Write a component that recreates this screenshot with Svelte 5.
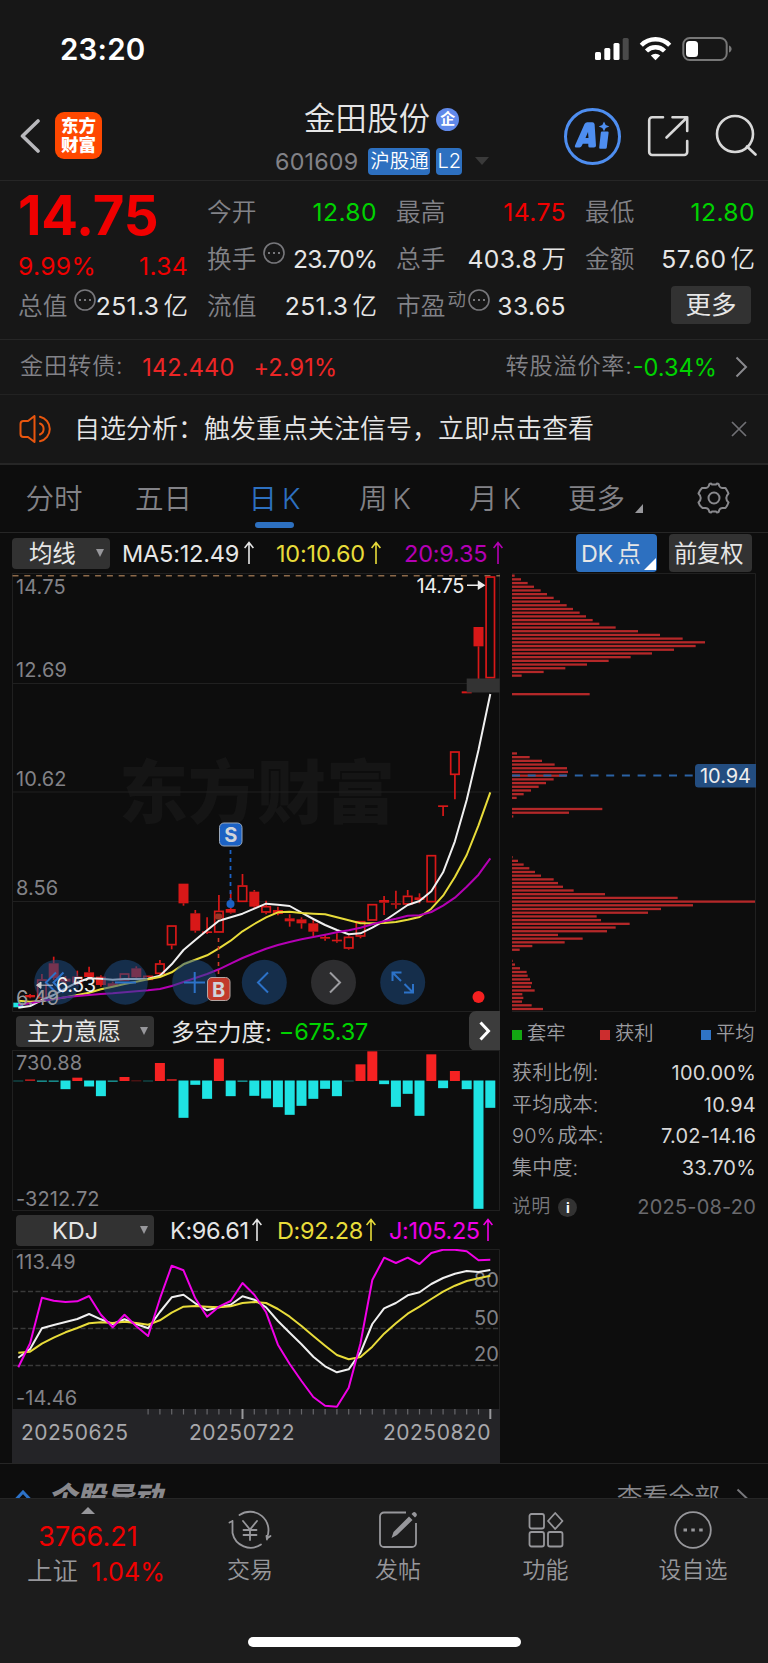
<script lang="ts">
    type Candle = [kind: 'f' | 'h', high: number, top: number, bottom: number, low: number];

    const STEP = 11.8;
    const x = (i: number) => 18.3 + i * STEP;
    const line = (ys: number[], base: number) =>
        ys.map((y, i) => `${x(i).toFixed(1)},${(base + y / 3).toFixed(1)}`).join(' ');

    // Candles: f = filled, h = hollow, values measured from the 740 gridline in thirds of a pixel
    const candles: Candle[] = [
        ['f', 788, 788, 802, 802], ['f', 762, 765, 772, 775], ['h', 702, 718, 775, 780],
        ['f', 650, 670, 714, 720], ['f', 708, 716, 725, 730], ['h', 692, 710, 728, 736],
        ['f', 680, 697, 711, 715], ['f', 706, 710, 735, 740], ['f', 725, 730, 740, 742],
        ['h', 700, 700, 722, 722], ['f', 679, 685, 712, 715], ['h', 707, 707, 720, 720],
        ['h', 660, 670, 702, 706], ['h', 556, 556, 616, 628], ['f', 431, 431, 490, 497],
        ['f', 510, 520, 572, 578], ['f', 532, 574, 579, 582], ['h', 465, 512, 578, 578],
        ['f', 455, 507, 518, 521], ['h', 402, 436, 486, 486], ['f', 450, 455, 500, 505],
        ['h', 482, 498, 518, 523], ['f', 500, 510, 522, 526], ['f', 523, 535, 544, 560],
        ['f', 532, 538, 550, 566], ['f', 540, 550, 575, 588], ['f', 583, 591, 596, 602],
        ['f', 580, 599, 604, 608], ['h', 586, 590, 626, 629], ['h', 543, 543, 590, 595],
        ['h', 492, 492, 542, 542], ['f', 468, 480, 488, 525], ['f', 452, 490, 494, 506],
        ['h', 450, 467, 494, 494], ['f', 460, 472, 480, 490], ['h', 345, 345, 487, 487],
        ['f', 196, 196, 201, 228], ['h', 34, 34, 105, 178], ['f', -146, -146, -140, -140],
        ['f', -339, -339, -281, -183], ['h', -491, -491, -185, -185]
    ];

    const ma5 = [803, 798, 780, 765, 745, 727, 715, 716, 719, 717, 717, 716, 707, 673, 630, 600, 571, 542, 532, 521, 506, 491, 494, 498, 518, 537, 555, 570, 583, 580, 563, 543, 519, 495, 483, 454, 397, 304, 180, 30, -138];
    const ma10 = [782, 785, 783, 778, 772, 765, 758, 748, 740, 732, 725, 718, 711, 697, 673, 659, 646, 625, 602, 574, 552, 532, 517, 515, 519, 521, 523, 532, 541, 550, 550, 549, 546, 539, 531, 506, 467, 411, 345, 256, 157];
    const ma20 = [795, 790, 783, 777, 772, 768, 765, 762, 760, 757, 754, 751, 747, 738, 726, 714, 702, 688, 671, 654, 640, 626, 615, 606, 598, 591, 584, 577, 571, 563, 553, 544, 536, 527, 526, 516, 497, 473, 440, 404, 355];

    // Long/short strength, positive values are buyers
    const force = [-1, 5, -4, -4, -26, 10, -18, -47, -4, 12, 2, -1, 54, 6, -112, -13, -55, 67, -47, -4, -46, -54, -80, -103, -76, -55, -25, -47, -1, 50, 89, -11, -79, -40, -106, 80, -23, 30, -26, -385, -82];

    const kdjJ = [412, 340, 203, 212, 216, 214, 198, 254, 292, 254, 289, 318, 206, 107, 121, 205, 260, 230, 213, 159, 194, 247, 344, 402, 453, 501, 527, 530, 473, 340, 150, 83, 99, 83, 102, 69, 59, 59, 64, 91, 89];
    const kdjK = [383, 357, 295, 285, 276, 267, 252, 268, 282, 268, 282, 295, 246, 202, 194, 220, 241, 232, 224, 199, 209, 232, 273, 308, 343, 380, 409, 427, 418, 368, 282, 235, 219, 196, 187, 162, 144, 131, 123, 126, 120];
    const kdjD = [368, 365, 341, 323, 307, 294, 280, 277, 279, 275, 279, 284, 271, 248, 230, 228, 230, 232, 229, 219, 216, 219, 237, 260, 288, 318, 347, 375, 388, 381, 350, 311, 280, 251, 230, 207, 185, 167, 153, 145, 137];

    // Chip distribution, each group starts at a price row
    const chipGroups: [number, number[]][] = [
        [0, [8, 27, 47, 66, 86, 105, 125, 144, 164, 183, 203, 222, 242, 262, 311, 378, 444, 512, 579, 551, 486, 420, 356, 290, 225, 160, 95, 29]],
        [32, [233]],
        [48, [15, 53, 90, 128, 165, 168, 164, 125, 102, 80, 57, 35, 14]],
        [63, [271, 171, 4]],
        [76, [2, 18, 35, 52, 69, 87, 125, 138, 153, 185, 279, 497, 729, 543, 447, 408, 254, 267, 353, 311, 285, 138, 212, 158, 61, 23]],
        [104, [2, 9, 24, 44, 47, 54, 60, 57, 68, 31, 34, 30, 59, 93]]
    ];
    const chips = chipGroups.flatMap(([start, ws]) => ws.map((w, i) => ({ y: 575.7 + (start + i) * 3.704, w: w / 3 })));

    const tabs = ['分时', '五日', '日 K', '周 K', '月 K', '更多'];
    const stats = [
        ['获利比例:', '100.00%'],
        ['平均成本:', '10.94'],
        ['90% 成本:', '7.02-14.16'],
        ['集中度:', '33.70%']
    ];
    const ticks = Array.from({ length: 30 }, (_, i) => i + 11);

    let activeTab = $state(2);
</script>

{#snippet dots()}
    <svg class="dots" width="22" height="22" viewBox="0 0 22 22" fill="none" stroke="#77777b" stroke-width="1.6">
        <circle cx="11" cy="11" r="10" />
        <path d="M5 11h2M10 11h2M15 11h2" stroke-width="2" />
    </svg>
{/snippet}

{#snippet up()}
    <svg class="up" width="10" height="24" viewBox="0 0 10 24" fill="none" stroke="currentColor" stroke-width="1.6">
        <path d="M5 23V2M.6 7 5 1.6 9.4 7" />
    </svg>
{/snippet}

<div class="screen">
    <div class="status">
        <span class="time">23:20</span>
        <svg width="140" height="26" viewBox="594 35 140 26">
            <rect x="595" y="52" width="6" height="8" rx="1.5" fill="#fff" />
            <rect x="604.3" y="48" width="6" height="12" rx="1.5" fill="#fff" />
            <rect x="613.5" y="43" width="6" height="17" rx="1.5" fill="#fff" />
            <rect x="622.7" y="38" width="6" height="22" rx="1.5" fill="#4a4a4a" />
            <g fill="none" stroke="#fff" stroke-width="4.4">
                <path d="M641.3 45.2a20 20 0 0 1 28.4 0" />
                <path d="M646.5 51a12.8 12.8 0 0 1 18 0" />
            </g>
            <path d="M650.8 55.6a7 7 0 0 1 9.4 0l-4.7 4.6z" fill="#fff" />
            <rect x="683.3" y="38" width="43.4" height="22" rx="6.5" fill="none" stroke="#777" stroke-width="2" />
            <rect x="686" y="41" width="12" height="16" rx="3.5" fill="#fff" />
            <path d="M729 45.5c3.5 1.2 3.5 5.8 0 7z" fill="#777" />
        </svg>
    </div>

    <header>
        <svg class="back" width="20" height="34" viewBox="0 0 20 34" fill="none" stroke="#b8b8bc" stroke-width="3.6" stroke-linecap="round" stroke-linejoin="round">
            <path d="M18 2 2.5 17 18 32" />
        </svg>
        <div class="logo">东方<br />财富</div>
        <div class="title">
            <div class="name">金田股份<span class="badge">企</span></div>
            <div class="code">
                601609<span class="tag">沪股通</span><span class="tag l2">L2</span>
                <svg width="14" height="8" viewBox="0 0 14 8"><path d="M0 0h14L7 8z" fill="#3a3a3a" /></svg>
            </div>
        </div>
        <svg class="ai" width="57" height="57" viewBox="0 0 57 57">
            <circle cx="28.5" cy="28.5" r="27" fill="none" stroke="#4e8ef0" stroke-width="3" />
            <g fill="#4e8ef0">
                <path fill-rule="evenodd" d="M11 37.5 20.5 16q1-1.7 2.8-1.7h5q2 0 2.3 2L32 37.5q0 2-2 2h-4q-1.7 0-1.7-1.6v-2.2h-5.5l-1.1 2.4q-.7 1.4-2.2 1.4h-3q-2.2 0-1.5-2zM21.5 30h3l-.5-6z" />
                <path d="M37 23.5h6.6q1.2 0 1 1.2l-1.8 14.8q-.2 1.3-1.4 1.3h-5q-1.4 0-1.2-1.3l1.6-14.8q.1-1.2 1.2-1.2zM40 13.5l1.7 3.4 3.6 1.5-3.6 1.6-1.7 3.3-1.7-3.3-3.6-1.6 3.6-1.5z" />
            </g>
        </svg>
        <svg class="share" width="42" height="42" viewBox="0 0 42 42" fill="none" stroke="#d8d8d8" stroke-width="2.6" stroke-linecap="round" stroke-linejoin="round">
            <path d="M16 2.3H5.2a3 3 0 0 0-3 3V37a3 3 0 0 0 3 3h32a3 3 0 0 0 3-3V26M25.5 2.3H40.2V16M40 2.5 19.5 22.5" />
        </svg>
        <svg width="42" height="42" viewBox="0 0 42 42" fill="none" stroke="#d8d8d8" stroke-width="2.6" stroke-linecap="round">
            <circle cx="20" cy="20" r="18" />
            <path d="m32 32.5 8.5 8" />
        </svg>
    </header>

    <section class="quote">
        <div class="col">
            <div class="price">14.75</div>
            <div class="row red"><span>9.99%</span><span>1.34</span></div>
            <div class="row"><label>总值{@render dots()}</label><b>251.3<i>亿</i></b></div>
        </div>
        <div class="col">
            <div class="row"><label>今开</label><b class="green">12.80</b></div>
            <div class="row"><label>换手{@render dots()}</label><b class="tight">23.70%</b></div>
            <div class="row"><label>流值</label><b>251.3<i>亿</i></b></div>
        </div>
        <div class="col">
            <div class="row"><label>最高</label><b class="red">14.75</b></div>
            <div class="row"><label>总手</label><b>403.8<i>万</i></b></div>
            <div class="row"><label class="pe">市盈<sup>动</sup>{@render dots()}</label><b>33.65</b></div>
        </div>
        <div class="col">
            <div class="row"><label>最低</label><b class="green">12.80</b></div>
            <div class="row"><label>金额</label><b>57.60<i>亿</i></b></div>
            <div class="row end"><button class="more">更多</button></div>
        </div>
    </section>

    <section class="bond">
        <span class="k">金田转债:</span>
        <span class="v">142.440</span>
        <span class="v">+2.91%</span>
        <span class="k right">转股溢价率:</span><span class="green">-0.34%</span>
        <svg width="13" height="22" viewBox="0 0 13 22" fill="none" stroke="#8a8a8e" stroke-width="2"><path d="m1.5 1.5 9.5 9.5-9.5 9.5" /></svg>
    </section>

    <section class="notice">
        <svg width="34" height="28" viewBox="0 0 34 28" fill="none" stroke="#e8560e" stroke-width="2" stroke-linecap="round" stroke-linejoin="round">
            <path d="M15.5 1v26l-6.5-5H4.5q-3 0-3-3V9q0-3 3-3H9zM21 8.5a6 6 0 0 1 0 11M21 1.8a12.5 12.5 0 0 1 0 24.4" />
        </svg>
        <span>自选分析：触发重点关注信号，立即点击查看</span>
        <svg width="16" height="16" viewBox="0 0 16 16" stroke="#707074" stroke-width="1.7"><path d="m1 1 14 14M15 1 1 15" /></svg>
    </section>

    <nav class="tabs">
        {#each tabs as tab, i}
            <button class:active={activeTab === i} onclick={() => (activeTab = i)}>
                {tab}
                {#if i === 5}<svg width="8" height="9" viewBox="0 0 8 9"><path d="M8 0v9H0z" fill="#97979b" /></svg>{/if}
            </button>
        {/each}
        <svg class="gear" width="34" height="32" viewBox="0 0 34 32" fill="none" stroke="#88888c" stroke-width="2" stroke-linejoin="round">
            <path d="M12 3.5q0-2 2-2l1 1h4l1-1q2 0 2 2 1 2.5 3.5 2.5h3q2.5 4 3 5.500c-3 3-3 6 0 9q-1 3-3 5.500h-3q-2.500 0-3.500 2.500 0 2-2 2l-1-1h-4l-1 1q-2 0-2-2-1-2.500-3.500-2.500h-3Q2 23 1.500 20.500c3-3 3-6 0-9Q3 8 5 6h3.500Q11 6 12 3.500z" />
            <circle cx="17" cy="16" r="5.5" />
        </svg>
    </nav>

    <section class="ma">
        <div class="select">均线<em></em></div>
        <span class="m5">MA5:12.49{@render up()}</span>
        <span class="m10">10:10.60{@render up()}</span>
        <span class="m20">20:9.35{@render up()}</span>
        <div class="dk">DK 点<svg width="12" height="12" viewBox="0 0 12 12"><path d="M12 0v12H0z" fill="#fff" /></svg></div>
        <div class="fq">前复权</div>
    </section>

    <div class="board">
        <div class="left">
            <svg width="488" height="439" viewBox="12 573 488 439">
                <text class="watermark" x="119" y="818" textLength="276">东方财富</text>
                <path d="M12.5 573V1011.5H499.5V573M12 573.5H500M12 683.5H500M12 792H500M12 901.5H500" fill="none" stroke="#202020" />
                <path d="M12.5 575.8H500" stroke="#8d6a4a" stroke-width="1.6" stroke-dasharray="6 5.8" />
                <g class="axis">
                    <text x="16" y="594">14.75</text>
                    <text x="16" y="676.5">12.69</text>
                    <text x="16" y="785.5">10.62</text>
                    <text x="16" y="895">8.56</text>
                </g>
                {#each candles as [kind, high, top, bottom, low], i}
                    {@const cx = x(i)}
                    {@const color = i === 0 ? '#1fe3e3' : '#d81818'}
                    {#if high < top}<path d="M{cx} {740 + high / 3}V{740 + top / 3}" stroke={color} stroke-width="1.7" />{/if}
                    {#if low > bottom}<path d="M{cx} {740 + bottom / 3}V{740 + low / 3}" stroke={color} stroke-width="1.7" />{/if}
                    {#if kind === 'h'}
                        <rect x={cx - 4.2} y={740.7 + top / 3} width="8.4" height={(bottom - top) / 3 - 1.4} fill="none" stroke={color} stroke-width="1.7" />
                    {:else}
                        <rect x={cx - 5} y={740 + top / 3} width="10" height={(bottom - top) / 3} fill={color} />
                    {/if}
                {/each}
                <rect x="466.7" y="678.5" width="33" height="14" fill="#333" />
                <g fill="none" stroke-width="2" stroke-linejoin="round">
                    <polyline points={line(ma5, 740)} stroke="#f0f0f0" />
                    <polyline points={line(ma10, 740)} stroke="#e8dc3a" />
                    <polyline points={line(ma20, 740)} stroke="#b400b4" />
                </g>
                <text x="416.5" y="592.5" class="mark" textLength="48">14.75</text>
                <path d="M467 585.2H480M478.5 581.7l5.5 3.5-5.5 3.5z" fill="#eee" stroke="#eee" stroke-width="1.5" />

                <path d="M230.5 850v50" stroke="#1c62c4" stroke-width="1.8" stroke-dasharray="4 4" />
                <circle cx="230.5" cy="904" r="4" fill="#1c62c4" />
                <path d="M218.5 938v37" stroke="#d03a28" stroke-width="1.6" stroke-dasharray="4 4" />
                <rect x="215" y="913.5" width="7" height="6" rx="2" fill="#9c3324" />

                <!-- floating chart controls -->
                <g class="controls">
                    <g fill="#1d4c84" fill-opacity=".52">
                        <circle cx="56.7" cy="982.3" r="22.5" />
                        <circle cx="125.3" cy="982.3" r="22.5" />
                        <circle cx="194.7" cy="982.3" r="22.5" />
                        <circle cx="264.3" cy="982.3" r="22.5" />
                        <circle cx="402.7" cy="982.3" r="22.5" />
                    </g>
                    <circle cx="333.5" cy="982.3" r="22.5" fill="#2d2d2f" />
                    <g fill="none" stroke="#2c72c8" stroke-width="2">
                        <path d="M56 972.5 46 982.5 56 992.5M63.5 972.5 53.5 982.5 63.5 992.5M115 982.5h21M184 982.5h21M194.7 972v21M268 972.5 258 982.5 268 992.5" />
                        <path d="M392.5 981v-8.5h9M393 973l8 8M413 984v8.5h-9M412.5 992l-8-8" />
                    </g>
                    <path d="m330 972.5 10 10-10 10" fill="none" stroke="#9c9ca0" stroke-width="2" />
                </g>
                <text x="56" y="992" class="mark" textLength="40">6.53</text>
                <path d="M53 985.2H39M41 982l-4.5 3.2 4.5 3.2z" fill="#ccc" stroke="#ccc" />
                <text x="16" y="1004.5" class="low">6.49</text>
                <rect x="219.5" y="823" width="22.5" height="23" rx="4.5" fill="#1c62c4" stroke="#9aa8bb" />
                <text x="230.7" y="842" class="flag">S</text>
                <rect x="207.5" y="977.5" width="22.5" height="23" rx="4.5" fill="#c23a2b" stroke="#b4a5a2" />
                <text x="218.7" y="996.5" class="flag">B</text>
                <circle cx="478.5" cy="997" r="6" fill="#f52020" />
            </svg>

            <div class="bar">
                <div class="select wide">主力意愿<em></em></div>
                <span class="name2">多空力度:</span><span class="green">−675.37</span>
                <div class="next"><svg width="12" height="20" viewBox="0 0 12 20" fill="none" stroke="#fff" stroke-width="3"><path d="m1.5 1.5 8 8.5-8 8.5" /></svg></div>
            </div>
            <svg width="488" height="161" viewBox="12 1050 488 161">
                <rect x="12.5" y="1050.5" width="487" height="160" fill="none" stroke="#202020" />
                {#each force as v, i}
                    <rect x={x(i) - 5} y={v > 0 ? 1081 - v / 3 : 1080.5} width="10" height={Math.max(Math.abs(v) / 3, 1)} fill={v > 0 ? '#f52222' : '#1fe3e3'} fill-opacity={Math.abs(v) < 3 ? 0.4 : Math.abs(v) < 7 ? 0.7 : 1} />
                {/each}
                <g class="axis">
                    <text x="16" y="1070">730.88</text>
                    <text x="16" y="1205.5">-3212.72</text>
                </g>
            </svg>

            <div class="bar kdj">
                <div class="select wide">KDJ<em></em></div>
                <span class="kk">K:96.61{@render up()}</span>
                <span class="dd">D:92.28{@render up()}</span>
                <span class="jj">J:105.25{@render up()}</span>
            </div>
            <svg width="488" height="160" viewBox="12 1249 488 160">
                <path d="M12.5 1409V1249.5H499.5V1409" fill="none" stroke="#202020" />
                <path d="M13 1291.5H498M13 1328.5H498M13 1365.5H498" stroke="#3a3a3a" stroke-width="1.6" stroke-dasharray="5 2.5" />
                <g class="axis">
                    <text x="16" y="1268.5">113.49</text>
                    <text x="16" y="1404.5">-14.46</text>
                    <text x="499" y="1287" text-anchor="end">80</text>
                    <text x="499" y="1324.5" text-anchor="end">50</text>
                    <text x="499" y="1361" text-anchor="end">20</text>
                </g>
                <g fill="none" stroke-width="2" stroke-linejoin="round">
                    <polyline points={line(kdjK, 1230)} stroke="#f0f0f0" />
                    <polyline points={line(kdjD, 1230)} stroke="#e8dc3a" />
                    <polyline points={line(kdjJ, 1230)} stroke="#f000e6" />
                </g>
            </svg>
            <div class="dates">
                <svg width="488" height="10" viewBox="12 1409 488 10">
                    {#each ticks as i}
                        <path d="M{x(i)} 1409v{i === 19 || i === 40 ? 10 : 5.5}" stroke={i === 19 || i === 40 ? '#99999c' : '#66666a'} stroke-width={i === 19 || i === 40 ? 2 : 1.2} />
                    {/each}
                </svg>
                <div><span>20250625</span><span>20250722</span><span>20250820</span></div>
            </div>
        </div>

        <div class="chip">
            <svg width="244" height="440" viewBox="512 573 244 440">
                <path d="M512 573.5H755.5V1011.5H512" fill="none" stroke="#202020" />
                {#each chips as c}
                    <rect x="512" y={c.y - 1.2} width={c.w} height="2.3" fill="#b42829" />
                {/each}
                <path d="M512 775.5H695" stroke="#2b62a4" stroke-width="2" stroke-dasharray="8 7.7" />
                <path d="M756 764v23.5h-57.5a3.5 3.5 0 0 1-3.5-3.5V767.5a3.5 3.5 0 0 1 3.5-3.5z" fill="#234d80" />
                <text x="700" y="783" fill="#eee" font-size="20" textLength="51">10.94</text>
            </svg>
            <div class="legend">
                <span><u class="g"></u>套牢</span>
                <span><u class="r"></u>获利</span>
                <span><u class="b"></u>平均</span>
            </div>
            {#each stats as [name, value]}
                <div class="stat"><span>{name}</span><b>{value}</b></div>
            {/each}
            <div class="stat note"><span>说明<s>i</s></span><b>2025-08-20</b></div>
        </div>
    </div>

    <section class="peek">
        <svg width="18" height="16" viewBox="0 0 18 16" fill="none" stroke="#2c72c8" stroke-width="3"><path d="m1.5 10 7.5-8 7.5 8" /></svg>
        <strong>个股异动</strong>
        <span>查看全部</span>
        <svg width="14" height="22" viewBox="0 0 14 22" fill="none" stroke="#77777b" stroke-width="2"><path d="m1.5 1.5 10 9.5-10 9.5" /></svg>
    </section>

    <footer>
        <div class="index">
            <svg width="14" height="7" viewBox="0 0 14 7"><path d="M7 0l7 7H0z" fill="#97979b" /></svg>
            <div class="num">3766.21</div>
            <div class="sub"><span class="sh">上证</span><span class="pct">1.04%</span></div>
        </div>
        <div class="item">
            <svg width="44" height="40" viewBox="0 0 44 40" fill="none" stroke="#97979b" stroke-width="1.8" stroke-linecap="round">
                <path d="M11.5 5A18.5 18.5 0 0 1 39 27.5M39 29.5l-.5-3.5M39 28.5l3.5-2.5M4.5 11v12A18.5 18.5 0 0 0 33 34.5M4.5 11l-3 1.5" />
                <path d="m15 11 7 8.5L29 11M22 19.5V30M15.5 20h13M15.5 25h13" />
            </svg>
            <span>交易</span>
        </div>
        <div class="item">
            <svg width="40" height="40" viewBox="0 0 40 40" fill="none" stroke="#97979b" stroke-width="1.8">
                <path d="M28 2.5H6a4 4 0 0 0-4 4V33a4 4 0 0 0 4 4h28a4 4 0 0 0 4-4V13" />
                <path d="M31 6.5 34.5 10 19 25l-5.5 3L15.5 22zM33.500 4l3.500 3.500 1.500-1.500q1-1.500-.5-3t-3-.5z" fill="#97979b" stroke="none" />
            </svg>
            <span>发帖</span>
        </div>
        <div class="item">
            <svg width="36" height="40" viewBox="0 0 36 40" fill="none" stroke="#97979b" stroke-width="1.8" stroke-linejoin="round">
                <rect x="1.5" y="4" width="14.5" height="14.5" rx="2" />
                <rect x="1.5" y="22" width="14.5" height="14.5" rx="2" />
                <rect x="20" y="22" width="14.5" height="14.5" rx="2" />
                <path d="M27.2 3 34.5 11 27.2 19 20 11z" />
            </svg>
            <span>功能</span>
        </div>
        <div class="item">
            <svg width="40" height="40" viewBox="0 0 40 40" fill="none" stroke="#97979b" stroke-width="1.8">
                <circle cx="20" cy="20" r="17.8" />
                <path d="M10.5 20h3.5M18.3 20h3.5M26.2 20h3.5" stroke-width="3.2" />
            </svg>
            <span>设自选</span>
        </div>
    </footer>
    <div class="home"></div>
</div>

<style>
    :global(body) {
        margin: 0;
        background: #0d0d0d;
    }

    .screen {
        width: 768px;
        height: 1663px;
        overflow: hidden;
        display: flex;
        flex-direction: column;
        background: #0d0d0d;
        color: #e6e6e6;
        font-family: Inter, "Noto Sans CJK SC", sans-serif;
        font-weight: 400;
        white-space: nowrap;
    }

    .screen > * {
        box-sizing: border-box;
        flex: none;
    }

    svg {
        display: block;
        flex: none;
    }

    button {
        font: inherit;
        color: inherit;
        background: none;
        border: 0;
        padding: 0;
    }

    .red { color: #f00000; }
    .green { color: #00d200; }

    .status {
        height: 98px;
        background: #171717;
        display: flex;
        justify-content: space-between;
        padding: 35px 34px 0 60px;
    }

    .time {
        color: #fff;
        font-size: 29.5px;
        line-height: 29px;
        font-weight: 600;
        letter-spacing: 0.2px;
    }

    header {
        height: 83px;
        background: #171717;
        border-bottom: 1px solid #262626;
        display: flex;
        padding-left: 20px;
    }

    .back { margin-top: 21px; }

    .logo {
        width: 47px;
        height: 47px;
        margin: 14px 0 0 15px;
        border-radius: 9px;
        background: #ff4800;
        color: #fff;
        font-size: 17.5px;
        line-height: 19px;
        font-weight: 900;
        text-align: center;
        box-sizing: border-box;
        padding-top: 4px;
    }

    .title {
        margin-left: 173px;
        width: 214px;
    }

    .name {
        display: flex;
        align-items: center;
        height: 43px;
        padding-left: 29px;
        font-size: 31.3px;
        line-height: 43px;
        box-sizing: border-box;
        letter-spacing: 0.3px;
        font-weight: 350;
    }

    .badge {
        width: 23px;
        height: 23px;
        margin-left: 6px;
        border-radius: 50%;
        background: #6089ea;
        color: #fff;
        font-size: 15px;
        line-height: 22px;
        font-weight: 700;
        text-align: center;
    }

    .code {
        display: flex;
        align-items: center;
        height: 40px;
        color: #828287;
        font-size: 23.3px;
        letter-spacing: 0.2px;
    }

    .tag {
        width: 63px;
        height: 27px;
        margin-left: 10px;
        border-radius: 4px;
        background: #2d70c0;
        color: #fff;
        font-size: 19.5px;
        line-height: 27px;
        text-align: center;
        font-weight: 350;
        letter-spacing: 0;
    }

    .l2 {
        width: 26px;
        margin-left: 6px;
        font-size: 20px;
    }

    .code svg { margin-left: 13px; }

    .ai { margin: 10px 26px 0 75px; }
    .share { margin: 17px 26px 0 0; }
    header > svg:last-child { margin-top: 16px; }

    .quote {
        height: 159px;
        background: #171717;
        border-bottom: 1px solid #262626;
        display: grid;
        grid-template-columns: 170px 170px 170px 170px;
        column-gap: 19px;
        padding: 8px 0 0 18px;
        font-size: 24.7px;
        line-height: 47px;
    }

    .col {
        display: flex;
        flex-direction: column;
    }

    .price {
        height: 54px;
        color: #f00000;
        font-size: 54.5px;
        line-height: 53px;
        font-weight: 650;
        letter-spacing: -0.2px;
    }

    .row {
        display: flex;
        justify-content: space-between;
        height: 47px;
    }

    .price + .row {
        height: 40px;
        letter-spacing: 0.3px;
    }

    .quote label {
        display: flex;
        color: #828287;
        font-weight: 350;
    }

    .quote b {
        font-weight: 400;
        letter-spacing: 0.4px;
    }

    .quote i {
        font-style: normal;
        font-size: 24.5px;
        font-weight: 350;
        margin-left: 4px;
        letter-spacing: 0;
    }

    .quote .tight { letter-spacing: -1px; }
    .dots { margin: 6px 0 0 7px; }
    .col:first-child label .dots { margin-right: -12px; }

    .pe sup {
        font-size: 18.5px;
        line-height: 32px;
        margin-left: 2px;
    }

    .pe .dots { margin-left: 2px; }

    .end { justify-content: flex-end; }

    .more {
        width: 80px;
        height: 38px;
        margin: 3px 4px 0 0;
        border-radius: 4px;
        background: #323232;
        font-size: 25.5px;
        line-height: 36px;
    }

    .bond {
        height: 55px;
        background: #171717;
        border-bottom: 1px solid #222;
        display: flex;
        align-items: center;
        padding-left: 20px;
        font-size: 23.6px;
        line-height: 53px;
    }

    .k {
        color: #828287;
        font-weight: 350;
        font-size: 23.2px;
        line-height: 51px;
        padding-bottom: 2px;
        letter-spacing: 0.8px;
    }

    .v {
        color: #ec2626;
        margin-left: 19px;
        letter-spacing: 0.1px;
    }

    .right { margin-left: auto; }
    .bond .right { letter-spacing: 0.8px; }
    .bond svg { margin: 0 20px 0 18px; }

    .notice {
        height: 70px;
        background: #171717;
        border-bottom: 2px solid #262626;
        display: flex;
        align-items: center;
        padding-left: 19px;
        font-size: 26px;
        font-weight: 350;
    }

    .notice span {
        margin: 0 auto 0 21px;
        padding-bottom: 5px;
    }

    .notice svg:last-child { margin-right: 21px; }

    .tabs {
        height: 68px;
        border-bottom: 1px solid #262626;
        display: grid;
        grid-template-columns: 108px 111px 111px 110px 110px 113px 1fr;
    }

    .tabs button {
        display: flex;
        flex-direction: column;
        align-items: center;
        position: relative;
        color: #828287;
        font-size: 28.5px;
        line-height: 67px;
        word-spacing: -3px;
        font-weight: 350;
    }

    .tabs button:nth-child(6) {
        flex-direction: row;
        padding-left: 18px;
    }

    .tabs button svg { margin: 20px 0 0 10px; }

    .tabs .active { color: #2d70c0; }

    .tabs .active::after {
        content: "";
        position: absolute;
        left: 36px;
        top: 57px;
        width: 39px;
        height: 6px;
        border-radius: 3px;
        background: #2d70c0;
    }

    .gear { margin: 17px 0 0 34px; }

    .ma {
        height: 40px;
        display: flex;
        align-items: center;
        padding-left: 12px;
        font-size: 23.5px;
        letter-spacing: -0.2px;
    }

    .ma span, .kdj span {
        display: flex;
        align-items: center;
    }

    .up { margin-left: 5px; }

    .select {
        display: flex;
        align-items: center;
        box-sizing: border-box;
        width: 98px;
        height: 31px;
        padding-left: 17px;
        border-radius: 4px;
        background: #323232;
        color: #e6e6e6;
        font-size: 23.5px;
        line-height: 31px;
    }

    .select em {
        margin: 0 6px 0 auto;
        border: 4.5px solid transparent;
        border-top: 8px solid #97979b;
        border-bottom: 0;
    }

    .m5 { width: 154px; margin-left: 12px; }
    .m10 { width: 127px; color: #e8dc3a; }
    .m20 { width: 141px; margin-left: 1px; color: #b400b4; }
    .m10 .up, .m20 .up { margin-left: 6px; }

    .dk, .fq {
        height: 38px;
        width: 81px;
        border-radius: 4px;
        background: #2d70c0;
        font-size: 23.3px;
        line-height: 39px;
        box-sizing: border-box;
        padding-left: 5px;
    }

    .dk {
        display: flex;
        margin-left: 31px;
        word-spacing: -2px;
    }

    .dk svg { margin: 24px 0 0 3px; }

    .fq {
        width: 83px;
        margin-left: 12px;
        background: #323232;
    }

    .board {
        height: 890px;
        display: flex;
        padding-left: 12px;
    }

    .left {
        width: 488px;
        display: flex;
        flex-direction: column;
    }

    .axis text, .low {
        fill: #828287;
        font-size: 20px;
        letter-spacing: 0.1px;
    }

    .watermark {
        fill: #151515;
        font-size: 69px;
        font-weight: 900;
    }

    .mark {
        fill: #eee;
        font-size: 20px;
    }

    .low { fill: #99999c; }

    .flag {
        fill: #d0d4da;
        font-size: 20px;
        font-weight: 700;
        text-anchor: middle;
    }

    .bar {
        height: 38px;
        display: flex;
        align-items: center;
        padding-left: 4px;
        font-size: 23.5px;
    }

    .wide {
        width: 138px;
        padding-left: 11px;
    }

    .name2 { margin: 0 7px 0 17px; }

    .bar .green { letter-spacing: -0.2px; }

    .next {
        display: flex;
        align-items: center;
        justify-content: center;
        width: 31px;
        height: 40px;
        margin-left: auto;
        border-radius: 7px 0 0 7px;
        background: #3c3c3c;
    }

    .kdj { letter-spacing: -0.35px; }
    .kdj .wide { padding-left: 36px; letter-spacing: 0; }
    .kdj .up { margin-left: 3px; }
    .kk { width: 107px; margin-left: 16px; }
    .dd { width: 112px; color: #e8dc3a; }
    .jj { color: #f000e6; }

    .dates {
        height: 54px;
        background: #242427;
        color: #a8a8ac;
        font-size: 21px;
    }

    .dates div {
        display: grid;
        grid-template-columns: 168px 194px 1fr;
        padding-left: 9px;
        line-height: 27px;
        letter-spacing: 0.5px;
    }

    .chip {
        width: 244px;
        margin-left: 12px;
        font-size: 20px;
    }

    .legend {
        display: grid;
        grid-template-columns: 88px 101px 1fr;
        height: 41px;
        font-size: 19.3px;
        line-height: 40px;
        color: #9c9ca0;
        font-weight: 350;
    }

    .legend u {
        display: inline-block;
        width: 10px;
        height: 10px;
        margin-right: 5px;
    }

    .g { background: #12a812; }
    .r { background: #cc2d2e; }
    .b { background: #2f74c6; }

    .stat {
        display: flex;
        justify-content: space-between;
        height: 31.5px;
        line-height: 38px;
        color: #9c9ca0;
        font-weight: 350;
        letter-spacing: 0.2px;
        word-spacing: -4px;
    }

    .stat b {
        color: #d8d8d8;
        font-weight: 400;
    }

    .note { margin-top: 8px; color: #77777b; font-size: 19px; }
    .note b { color: #6a6a6e; font-size: 20px; letter-spacing: 0.2px; }

    .note s {
        display: inline-block;
        width: 19px;
        height: 19px;
        margin-left: 8px;
        border-radius: 50%;
        background: #323232;
        color: #fff;
        font-size: 14px;
        line-height: 19px;
        font-weight: 700;
        text-align: center;
        text-decoration: none;
    }

    .peek {
        height: 35px;
        border-top: 1px solid #262626;
        overflow: hidden;
        display: flex;
        align-items: flex-start;
        padding: 19px 18px 0 14px;
        line-height: 30px;
        color: #88888c;
    }

    .peek svg:first-child { margin-top: 7px; }

    .peek strong {
        margin: -1px auto 0 16px;
        font-size: 28.5px;
        font-weight: 900;
        font-style: italic;
    }

    .peek span {
        font-size: 25.8px;
        font-weight: 350;
    }

    .peek svg:last-child { margin: 5px 0 0 16px; }

    footer {
        height: 139px;
        background: #1c1c1c;
        border-top: 1px solid #262626;
        display: grid;
        grid-template-columns: 176px 148px 148px 147px 148px;
        color: #97979b;
        font-size: 23px;
    }

    .index {
        display: flex;
        flex-direction: column;
        align-items: center;
    }

    .index svg { margin-top: 8px; }

    .num {
        color: #f00000;
        font-size: 27px;
        line-height: 36px;
        margin-top: 5px;
    }

    .sub {
        display: flex;
        height: 34px;
        padding-left: 16px;
        line-height: 34px;
    }

    .sh {
        font-size: 25.5px;
        font-weight: 350;
        line-height: 31px;
    }

    .pct {
        color: #f00000;
        margin-left: 13px;
        font-size: 25.2px;
    }

    .item {
        display: flex;
        flex-direction: column;
        align-items: center;
        padding-top: 11px;
        font-weight: 350;
    }

    .item span { line-height: 40px; }

    .home {
        height: 26px;
        background: #1c1c1c;
    }

    .home::before {
        content: "";
        display: block;
        width: 273px;
        height: 10px;
        margin: 0 auto;
        border-radius: 5px;
        background: #fff;
    }
</style>
